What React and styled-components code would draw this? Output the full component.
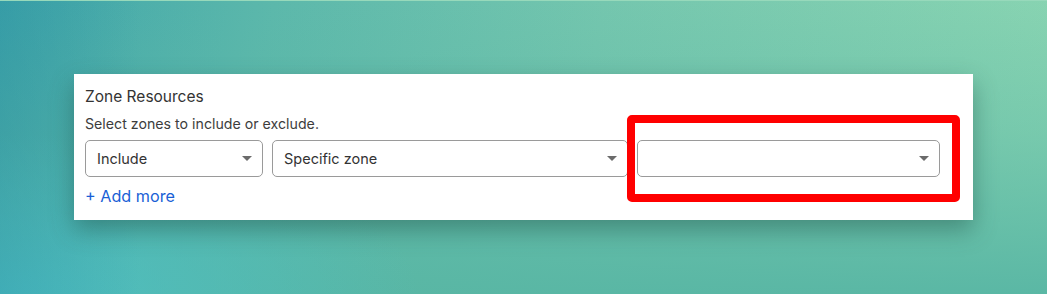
import React from 'react';
import styled, { createGlobalStyle } from 'styled-components';

const Global = createGlobalStyle`
  html, body { margin: 0; padding: 0; }
  body {
    width: 1047px;
    height: 294px;
    overflow: hidden;
    font-family: Inter, "Liberation Sans", Arial, sans-serif;
    background:
      linear-gradient(90deg, rgba(40, 140, 160, 0.35) 0px, rgba(40, 140, 160, 0) 140px),
      radial-gradient(ellipse 420px 160px at 0% 100%, rgba(75, 192, 200, 0.85), rgba(75, 192, 200, 0)),
      linear-gradient(180deg, rgba(88, 182, 164, 0) 0%, rgba(88, 182, 164, 0.35) 45%, rgba(88, 182, 164, 0.95) 100%),
      linear-gradient(100deg, #3ea5aa 0%, #5cb8ab 25%, #74c6ae 55%, #8ad5b2 100%);
  }
`;

const Page = styled.div`
  padding: 74px 74px 0 74px;
  box-sizing: border-box;
  border-top: 1px solid #97d9bb;
`;

const Card = styled.section`
  position: relative;
  width: 899px;
  height: 146px;
  box-sizing: border-box;
  margin-top: -1px;
  padding: 13px 11px 0 11px;
  background: #fff;
  box-shadow: 0 10px 22px rgba(30, 80, 70, 0.45);
`;

const Title = styled.h2`
  margin: 0;
  font-size: 15.5px;
  line-height: 20px;
  font-weight: 400;
  color: #333;
`;

const Hint = styled.p`
  margin: 7px 0 0 0;
  font-size: 14.2px;
  line-height: 20px;
  color: #3d3d3d;
`;

const Fields = styled.div`
  display: grid;
  grid-template-columns: 178px 356px 303px;
  column-gap: 9px;
  margin-top: 6px;
`;

const Select = styled.div`
  display: flex;
  align-items: center;
  justify-content: space-between;
  height: 37px;
  box-sizing: border-box;
  padding: 0 11px;
  border: 1px solid #9a9a9a;
  border-radius: 5px;
  background: #fff;
  font-size: 14.5px;
  color: #333;
`;

const Caret = styled.span`
  width: 0;
  height: 0;
  border-left: 5px solid transparent;
  border-right: 5px solid transparent;
  border-top: 5px solid #6b6b6b;
  margin-right: -1px;
`;

const AddMore = styled.button`
  margin-top: 9px;
  padding: 0;
  border: 0;
  background: none;
  font-family: inherit;
  font-size: 16.2px;
  line-height: 20px;
  color: #1a5fd6;
  cursor: pointer;
`;

const Highlight = styled.div`
  position: absolute;
  left: 553px;
  top: 41px;
  width: 333px;
  height: 87px;
  box-sizing: border-box;
  border: 8px solid #ff0000;
  border-radius: 5px;
  pointer-events: none;
`;

function Dropdown({ value }) {
  return (
    <Select>
      <span>{value}</span>
      <Caret />
    </Select>
  );
}

export default function App() {
  return (
    <>
      <Global />
      <Page>
        <Card>
          <Title>Zone Resources</Title>
          <Hint>Select zones to include or exclude.</Hint>
          <Fields>
            <Dropdown value="Include" />
            <Dropdown value="Specific zone" />
            <Dropdown value="" />
          </Fields>
          <AddMore>+ Add more</AddMore>
          <Highlight />
        </Card>
      </Page>
    </>
  );
}
